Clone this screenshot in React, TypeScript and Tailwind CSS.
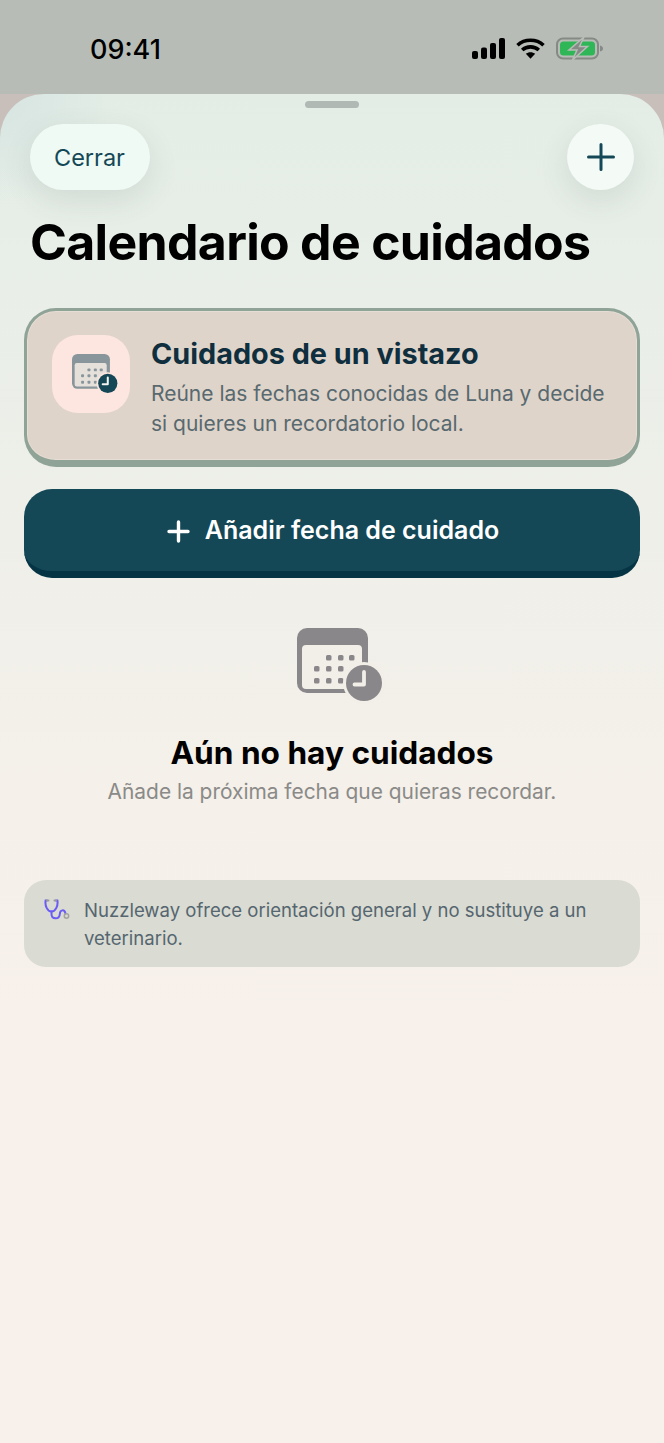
const FONT = { fontFamily: 'Inter, "Liberation Sans", sans-serif' }

function CalendarClock({ size, body, sheet, clock, hand, ring }: { size: number; body: string; sheet: string; clock: string; hand: string; ring: string }) {
  const rows = [
    [27, [29, 41, 52]],
    [38, [17, 29, 41]],
    [50, [17, 29, 41]],
  ] as const
  return (
    <svg width={size} height={(size * 76) / 88} viewBox="0 0 88 76" fill="none">
      <rect x="0" y="0" width="71" height="65" rx="10" fill={body} />
      <rect x="5" y="17" width="60" height="44" rx="4" fill={sheet} />
      {rows.map(([y, xs]) =>
        xs.map((x) => <rect key={`${x}-${y}`} x={x} y={y} width="5.5" height="5.5" rx="1.6" fill={body} />),
      )}
      <circle cx="67" cy="55" r="21" fill={ring} />
      <circle cx="67" cy="55" r="18" fill={clock} />
      <path d="M67 44V56.5H57.5" stroke={hand} strokeWidth="3.8" strokeLinecap="round" strokeLinejoin="round" />
    </svg>
  )
}

function StatusIcons() {
  return (
    <div className="flex items-center gap-[11px]">
      <svg width="33" height="21" viewBox="0 0 33 21" fill="black">
        <rect x="0" y="13" width="6" height="8" rx="2" />
        <rect x="9" y="9.5" width="6" height="11.5" rx="2" />
        <rect x="18" y="5" width="6" height="16" rx="2" />
        <rect x="27" y="0" width="6" height="21" rx="2" />
      </svg>
      <svg width="29" height="21" viewBox="0 0 29 21" fill="none" stroke="black" strokeWidth="3.6">
        <path d="M1.5 7.2C8.6 .6 20.4 .6 27.5 7.2" />
        <path d="M6.2 12C10.8 7.8 18.2 7.8 22.8 12" />
        <path d="M14.5 20.8L9.8 15.8C12.3 13.6 16.7 13.6 19.2 15.8Z" fill="black" stroke="none" />
      </svg>
      <svg width="47" height="23" viewBox="0 0 47 23" fill="none">
        <rect x="1" y="1.5" width="41" height="20" rx="6" stroke="#858a86" strokeWidth="2" />
        <rect x="4" y="4.5" width="35" height="14" rx="3.5" fill="#2fb757" />
        <path d="M44 8.5C46 9 47 10 47 11.5C47 13 46 14 44 14.5Z" fill="#858a86" />
        <path d="M28 0L13 13H21L16.5 23L31.5 9.5H23.5Z" fill="#858a86" stroke="#b9bdb8" strokeWidth="1.5" />
      </svg>
    </div>
  )
}

function Stethoscope() {
  return (
    <svg width="27" height="22" viewBox="0 0 27 22" fill="none" className="shrink-0">
      <path d="M3 1.5H1.6C.8 6.5 3.2 12.5 7.5 12.5C11.8 12.5 14.2 6.5 13.4 1.5H12" stroke="#6a5cf5" strokeWidth="2" strokeLinecap="round" />
      <path d="M7.5 12.5V15C7.5 20.5 15.5 21 15.8 15C16 10.5 20.5 10 21.5 14.5" stroke="#6a5cf5" strokeWidth="2" strokeLinecap="round" />
      <path d="M3 1.5H4.5M12 1.5H10.5" stroke="#9a9a9a" strokeWidth="2" strokeLinecap="round" />
      <circle cx="22.5" cy="17" r="2.2" stroke="#a3a3a0" strokeWidth="1.5" />
    </svg>
  )
}

export default function App() {
  return (
    <div className="w-[664px] h-[1443px] flex flex-col bg-[#c9bfba] overflow-hidden" style={FONT}>
      {/* Status bar */}
      <div className="h-[94px] shrink-0 bg-[#b7bcb7] flex items-start justify-between pt-[34px] pl-[90px] pr-[61px]">
        <span className="text-[27px] leading-[32px] font-medium text-black">09:41</span>
        <div className="pt-[3px] -ml-[1px]">
          <StatusIcons />
        </div>
      </div>

      {/* Sheet */}
      <div className="flex-1 rounded-t-[44px] bg-[radial-gradient(circle_at_0px_0px,#d6e4e1_0,rgba(214,228,225,0)_110px),linear-gradient(180deg,#e3ede6_0%,#e8eee8_12%,#eeefe9_30%,#f5f0ea_52%,#f8f1eb_70%,#f8f1eb_100%)] px-[24px] pt-[7px] flex flex-col">
        <div className="w-[54px] h-[7px] rounded-full bg-[#b0b9b3] self-center" />

        <div className="flex items-center justify-between mt-[16px] pl-[6px] pr-[6px]">
          <button className="w-[120px] h-[66px] rounded-[33px] bg-[#f0faf4] text-[#144857] text-[23.5px] pt-[1px] pr-[1px] shadow-[0_10px_30px_rgba(60,80,70,0.12)]">
            Cerrar
          </button>
          <button className="w-[67px] h-[66px] rounded-full bg-[#f4faf5] flex items-center justify-center shadow-[0_10px_30px_rgba(60,80,70,0.12)]">
            <svg width="28" height="28" viewBox="0 0 28 28" fill="none" stroke="#144857" strokeWidth="3" strokeLinecap="round">
              <path d="M14 1.5V26.5M1.5 14H26.5" />
            </svg>
          </button>
        </div>

        <h1 className="mt-[22px] pl-[6px] text-[50px] leading-[60px] font-bold tracking-[-0.7px] text-black whitespace-nowrap">
          Calendario de cuidados
        </h1>

        {/* Summary card */}
        <div className="mt-[36px] h-[159px] rounded-[32px] border-[3px] border-b-[7px] border-[#8fa397] bg-[#dfd4ca] shadow-[inset_0_0_0_1px_rgba(255,255,255,0.22)] flex items-start pl-[25px] pt-[24px]">
          <div className="w-[78px] h-[78px] rounded-[26px] bg-[#fde6df] flex items-center justify-center shrink-0">
            <div className="ml-[8px]">
              <CalendarClock size={47} body="#88969b" sheet="#e6e0db" clock="#144857" hand="#f4f4f0" ring="#fde6df" />
            </div>
          </div>
          <div className="ml-[21px] mt-[2px]">
            <div className="text-[28.8px] leading-[34px] font-bold text-[#0f2f3f] whitespace-nowrap">Cuidados de un vistazo</div>
            <p className="mt-[8px] text-[21px] leading-[30px] text-[#58696f] whitespace-nowrap">
              Reúne las fechas conocidas de Luna y decide
              <br />
              si quieres un recordatorio local.
            </p>
          </div>
        </div>

        {/* Add button */}
        <button className="mt-[22px] h-[89px] rounded-[28px] bg-[#144857] border-b-[7px] border-[#053545] flex items-center justify-center gap-[15px] pt-[2px] text-white text-[25px] font-semibold">
          <svg width="23" height="23" viewBox="0 0 23 23" fill="none" stroke="white" strokeWidth="3.4" strokeLinecap="round" className="ml-[2px]">
            <path d="M11.5 2V21M2 11.5H21" />
          </svg>
          Añadir fecha de cuidado
        </button>

        {/* Empty state */}
        <div className="mt-[50px] flex flex-col items-center">
          <div className="ml-[18px]">
            <CalendarClock size={88} body="#8a878a" sheet="#f2eee8" clock="#8a878a" hand="#f2eee8" ring="#f2eee8" />
          </div>
          <div className="mt-[30px] text-[31.6px] leading-[38px] font-bold text-black">Aún no hay cuidados</div>
          <div className="mt-[5px] text-[20.9px] leading-[30px] text-[#8a8a88]">Añade la próxima fecha que quieras recordar.</div>
        </div>

        {/* Disclaimer */}
        <div className="mt-[73px] h-[87px] rounded-[22px] bg-[#dadbd2] flex items-start pl-[20px] pr-[40px] pt-[16px] gap-[13px]">
          <div className="pt-[3px]">
            <Stethoscope />
          </div>
          <p className="text-[18.55px] leading-[28px] text-[#556670]">
            Nuzzleway ofrece orientación general y no sustituye a un veterinario.
          </p>
        </div>
      </div>
    </div>
  )
}
